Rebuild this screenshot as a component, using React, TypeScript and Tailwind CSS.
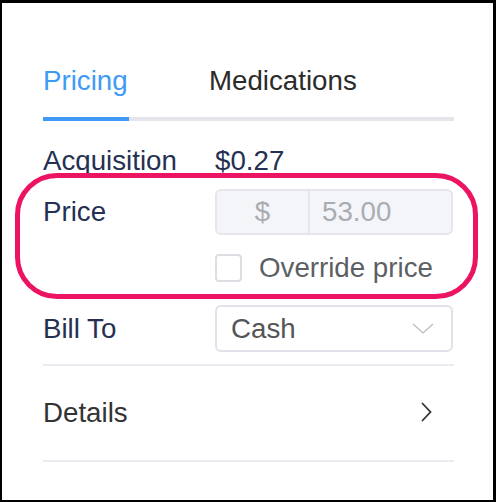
const font = { fontFamily: '"Liberation Sans", Arial, sans-serif' }

function DownChevron() {
  return (
    <svg width="22" height="11" viewBox="0 0 22 11" fill="none" stroke="#b9bcc1" strokeWidth="1.3">
      <path d="M1 1l10 9 10-9" />
    </svg>
  )
}

function RightChevron() {
  return (
    <svg width="11" height="20" viewBox="0 0 11 20" fill="none" stroke="#333" strokeWidth="1.8" strokeLinecap="round">
      <path d="M1.5 1.5l8 8.5-8 8.5" />
    </svg>
  )
}

export default function App() {
  return (
    <div
      className="relative h-[502px] w-[496px] overflow-hidden border-2 border-t-[3px] border-r-[3px] border-black bg-white text-[27.7px]"
      style={font}
    >
      <div className="flex flex-col pl-[41px] pr-[39px] pt-[62px]">
        {/* Tabs */}
        <div className="flex border-b-4 border-[#e3e5ea]">
          <div className="-mb-1 w-[86px] border-b-4 border-[#3d9bf6] pb-5 leading-[32px] text-[#3d9bf6]">
            Pricing
          </div>
          <div className="ml-[80px] pb-5 leading-[32px] text-[#2b2b2b]">Medications</div>
        </div>

        {/* Acquisition */}
        <div className="mt-6 flex leading-[32px] text-[#253052]">
          <div className="w-[172px]">Acquisition</div>
          <div>$0.27</div>
        </div>

        {/* Price */}
        <div className="mt-3 flex items-center">
          <div className="w-[172px] leading-[32px] text-[#253052]">Price</div>
          <div className="flex h-[46px] w-[238px] overflow-hidden rounded-[6px] border-2 border-[#e4e6eb] bg-[#f4f5f8] text-[#a9acb1]">
            <div className="flex w-[93px] items-center justify-center border-r-2 border-[#e4e6eb]">$</div>
            <div className="flex flex-1 items-center pl-[12px]">53.00</div>
          </div>
        </div>

        {/* Override */}
        <div className="mt-[17px] flex items-center pl-[172px]">
          <div className="h-[28px] w-[27px] rounded-[4px] border-2 border-[#dcdee3] bg-white" />
          <div className="ml-[17px] leading-[32px] text-[#5c5f63]">Override price</div>
        </div>

        {/* Bill To */}
        <div className="mt-[21px] flex items-center">
          <div className="w-[172px] leading-[32px] text-[#253052]">Bill To</div>
          <div className="flex h-[47px] w-[238px] items-center justify-between rounded-[6px] border-2 border-[#dfe2e8] bg-white pl-[14px] pr-[17px] text-[#555]">
            <span className="leading-[32px]">Cash</span>
            <DownChevron />
          </div>
        </div>

        <div className="mt-3 h-[2px] bg-[#e8ebf0]" />

        {/* Details */}
        <div className="flex h-[94px] items-center justify-between">
          <span className="leading-[32px] text-[#333]">Details</span>
          <div className="mr-[22px] -mt-[2px]">
            <RightChevron />
          </div>
        </div>

        <div className="h-[2px] bg-[#e8ebf0]" />
      </div>

      {/* Highlight annotation */}
      <div className="absolute left-[13px] top-[170px] h-[126px] w-[463px] rounded-[42px] border-[5px] border-[#ec1462]" />
    </div>
  )
}
